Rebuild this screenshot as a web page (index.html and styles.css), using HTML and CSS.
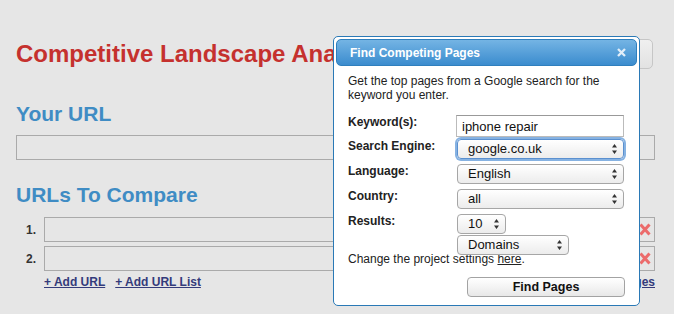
FILE: index.html
```html
<!DOCTYPE html>
<html lang="en">
<head>
    <meta charset="UTF-8">
    <title>Competitive Landscape Analysis</title>
    <link rel="stylesheet" href="styles.css">
</head>
<body>
<div class="page">
    <div class="title-row">
        <h1>Competitive Landscape Analysis</h1>
        <button class="page-button" aria-label="Find Competing Pages"></button>
    </div>

    <h2 class="your-url">Your URL</h2>
    <input type="text" class="url-input" id="your-url">

    <h2 class="compare">URLs To Compare</h2>
    <div class="url-list">
        <div class="url-row">
            <span class="url-num">1.</span>
            <div class="url-box">
                <input type="text">
                <span class="remove">
                    <svg width="12" height="13" viewBox="0 0 12 13"><path d="M1.5 1.5 L10.5 11.5 M10.5 1.5 L1.5 11.5" stroke="#ec6b6b" stroke-width="3" fill="none"/></svg>
                </span>
            </div>
        </div>
        <div class="url-row">
            <span class="url-num">2.</span>
            <div class="url-box">
                <input type="text">
                <span class="remove">
                    <svg width="12" height="13" viewBox="0 0 12 13"><path d="M1.5 1.5 L10.5 11.5 M10.5 1.5 L1.5 11.5" stroke="#ec6b6b" stroke-width="3" fill="none"/></svg>
                </span>
            </div>
        </div>
    </div>
    <div class="url-links">
        <a href="#">+ Add URL</a>
        <a href="#">+ Add URL List</a>
        <a href="#" class="find-link">Pages</a>
    </div>
</div>

<div class="dialog">
    <div class="dialog-title">
        <span>Find Competing Pages</span>
        <svg class="close" width="9" height="9" viewBox="0 0 9 9"><path d="M1 1 L8 8 M8 1 L1 8" stroke="#e2eef9" stroke-width="2.3" fill="none"/></svg>
    </div>
    <div class="dialog-body">
        <p class="intro">Get the top pages from a Google search for the keyword you enter.</p>

        <div class="form-rows">
            <div class="form-row first">
                <label class="form-label">Keyword(s):</label>
                <input type="text" class="text-input" value="iphone repair">
            </div>
            <div class="form-row tight">
                <label class="form-label">Search Engine:</label>
                <div class="select wide focused">
                    <span>google.co.uk</span>
                    <svg width="5" height="10" viewBox="0 0 5 10"><path d="M2.5 0 L5 3.5 L0 3.5 Z M0 6.5 L5 6.5 L2.5 10 Z" fill="#333"/></svg>
                </div>
            </div>
            <div class="form-row">
                <label class="form-label">Language:</label>
                <div class="select wide">
                    <span>English</span>
                    <svg width="5" height="10" viewBox="0 0 5 10"><path d="M2.5 0 L5 3.5 L0 3.5 Z M0 6.5 L5 6.5 L2.5 10 Z" fill="#333"/></svg>
                </div>
            </div>
            <div class="form-row">
                <label class="form-label">Country:</label>
                <div class="select wide">
                    <span>all</span>
                    <svg width="5" height="10" viewBox="0 0 5 10"><path d="M2.5 0 L5 3.5 L0 3.5 Z M0 6.5 L5 6.5 L2.5 10 Z" fill="#333"/></svg>
                </div>
            </div>
            <div class="form-row">
                <label class="form-label">Results:</label>
                <div class="select-stack">
                    <div class="select small">
                        <span>10</span>
                        <svg width="5" height="10" viewBox="0 0 5 10"><path d="M2.5 0 L5 3.5 L0 3.5 Z M0 6.5 L5 6.5 L2.5 10 Z" fill="#333"/></svg>
                    </div>
                    <div class="select medium">
                        <span>Domains</span>
                        <svg width="5" height="10" viewBox="0 0 5 10"><path d="M2.5 0 L5 3.5 L0 3.5 Z M0 6.5 L5 6.5 L2.5 10 Z" fill="#333"/></svg>
                    </div>
                </div>
            </div>
        </div>

        <p class="note">Change the project settings <a href="#">here</a>.</p>

        <div class="actions">
            <button class="find-button">Find Pages</button>
        </div>
    </div>
</div>
</body>
</html>
```

FILE: styles.css
```css
/*Page*/
body {
    margin: 0;
    background-color: #e6e6e6;
    font-family: "Liberation Sans", Arial, sans-serif;
    color: #222;
}

.page {
    width: 639px;
    margin-left: 16px;
    padding-top: 39px;
}

.title-row {
    display: flex;
    align-items: center;
    justify-content: space-between;
    height: 30px;
    margin-right: 2px;
}

h1 {
    margin: 0;
    font-size: 24px;
    line-height: 28px;
    color: #c5312e;
    white-space: nowrap;
}

.page-button {
    width: 200px;
    height: 30px;
    border: 1px solid #c6c6c6;
    border-radius: 5px;
    background: linear-gradient(#f0f0f0, #e2e2e2);
}

h2 {
    margin: 0;
    font-size: 21px;
    line-height: 24px;
    color: #3f8cc4;
}

.your-url {
    margin-top: 33px;
}

.url-input {
    display: block;
    width: 100%;
    height: 25px;
    margin-top: 9px;
    box-sizing: border-box;
    border: 1px solid #aaa;
    background: transparent;
}

.compare {
    margin-top: 23px;
}

.url-list {
    margin-top: 10px;
    display: flex;
    flex-direction: column;
    gap: 4px;
}

.url-row {
    display: flex;
    align-items: center;
    height: 25px;
}

.url-num {
    width: 20px;
    margin-right: 8px;
    text-align: right;
    font-weight: bold;
    font-size: 12px;
    color: #333;
}

.url-box {
    flex: 1;
    display: flex;
    align-items: center;
    height: 25px;
    box-sizing: border-box;
    border: 1px solid #aaa;
}

.url-box input {
    flex: 1;
    height: 100%;
    border: none;
    background: transparent;
}

.remove {
    display: flex;
    margin-right: 3px;
}

.url-links {
    display: flex;
    margin-top: 4px;
    padding-left: 28px;
    line-height: 14px;
}

.url-links a {
    font-weight: bold;
    font-size: 12px;
    color: #343b7b;
    margin-right: 10px;
}

.url-links .find-link {
    margin-left: auto;
    margin-right: 0;
}

/*Dialog*/
.dialog {
    position: absolute;
    left: 333px;
    top: 36px;
    width: 307px;
    height: 270px;
    box-sizing: border-box;
    padding: 2px;
    border: 1px solid #2a79b6;
    border-radius: 5px;
    background-color: #fff;
}

.dialog-title {
    display: flex;
    align-items: center;
    justify-content: space-between;
    height: 27px;
    box-sizing: border-box;
    padding: 0 10px 0 13px;
    border: 1px solid #2f7fbd;
    border-radius: 5px;
    background: linear-gradient(#74b4e4, #3b8cce);
    color: white;
    font-weight: bold;
    font-size: 12px;
}

.dialog-body {
    padding: 8px 11px 0 12px;
    font-size: 12px;
    line-height: 14px;
}

.intro {
    margin: 0;
}

.form-rows {
    margin-top: 13px;
}

.form-row {
    display: flex;
    margin-top: 5px;
}

.form-row.first {
    margin-top: 0;
}

.form-row.tight {
    margin-top: 2px;
}

.form-label {
    flex: none;
    width: 108px;
    font-weight: bold;
}

.text-input {
    width: 168px;
    height: 22px;
    box-sizing: border-box;
    padding: 0 5px;
    border: 1px solid #bbb;
    border-top-color: #999;
    font: 13px "Liberation Sans", Arial, sans-serif;
    color: #111;
}

.select {
    display: flex;
    align-items: center;
    justify-content: space-between;
    height: 20px;
    box-sizing: border-box;
    margin-left: 1px;
    padding: 0 6px 0 10px;
    border: 1px solid #a6a6a6;
    border-radius: 4px;
    background: linear-gradient(#fff, #ececec);
    font-size: 13px;
    color: #111;
}

.select.wide {
    width: 167px;
}

.select.small {
    width: 49px;
}

.select.medium {
    width: 112px;
    position: relative;
    z-index: 1;
}

.select.focused {
    border-color: #5b90cf;
    box-shadow: 0 0 0 2px #86b2e2;
}

.select-stack {
    display: flex;
    flex-direction: column;
    gap: 1px;
}

.note {
    margin: -3px 0 0;
}

.note a {
    color: inherit;
}

.actions {
    display: flex;
    justify-content: flex-end;
    margin-top: 11px;
    padding-right: 1px;
}

.find-button {
    width: 158px;
    height: 20px;
    padding: 0;
    border: 1px solid #a3a3a3;
    border-radius: 4px;
    background: linear-gradient(#fff, #e8e8e8);
    font: bold 12.5px "Liberation Sans", Arial, sans-serif;
    color: #111;
}
```
